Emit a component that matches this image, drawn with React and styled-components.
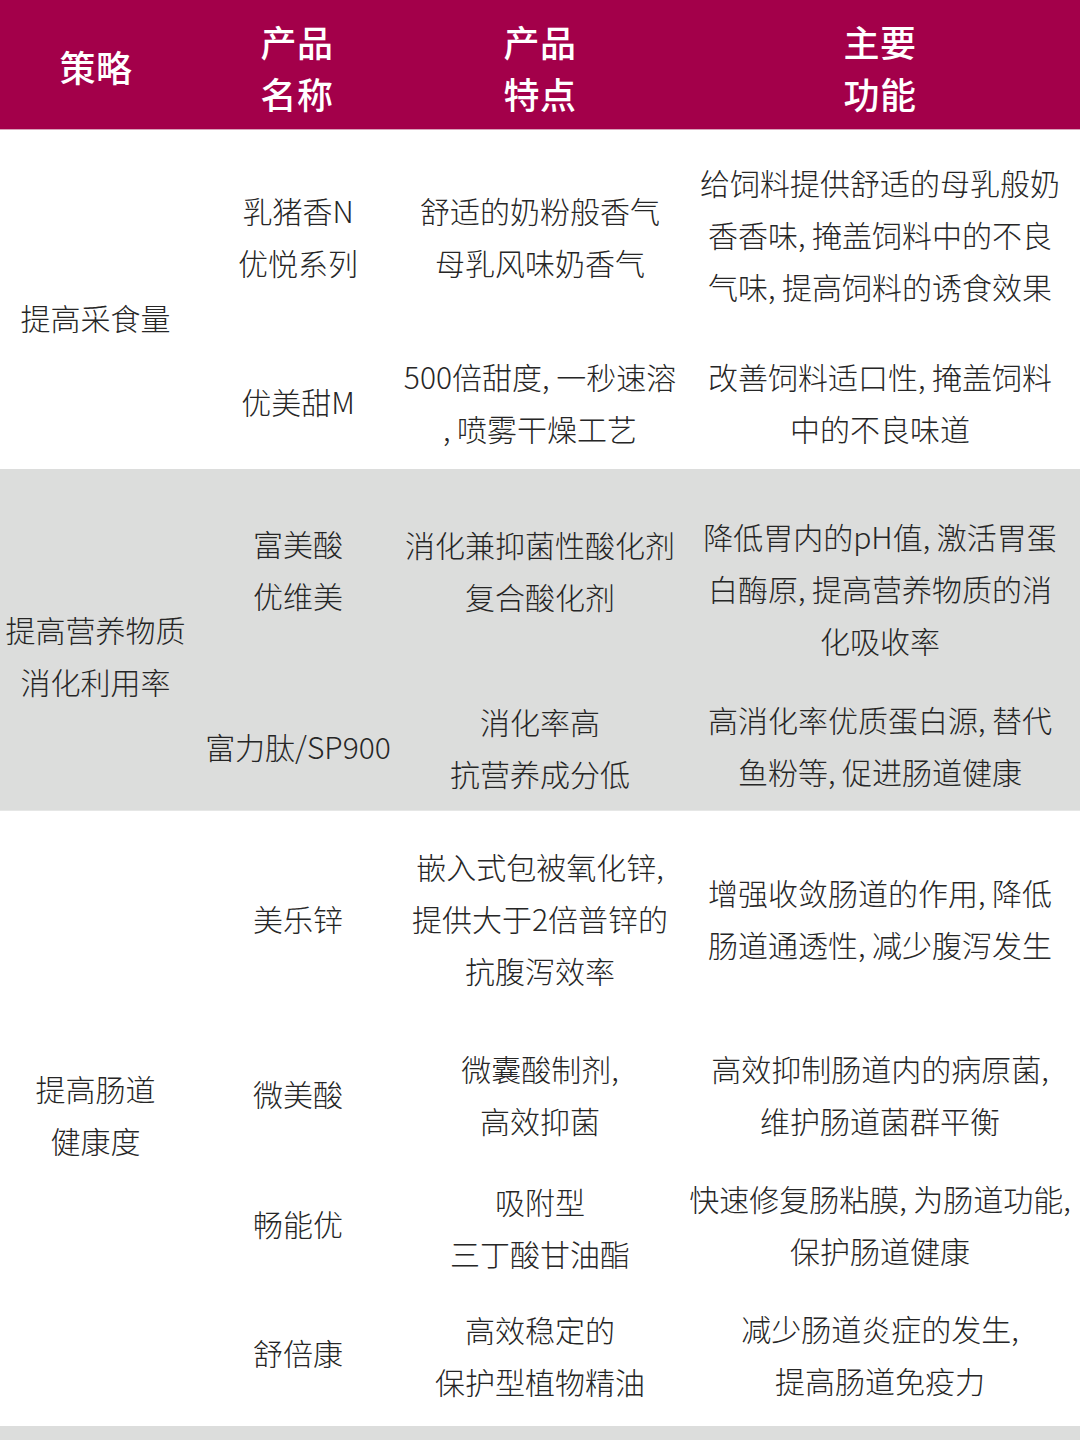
import React from "react";
import styled, { createGlobalStyle } from "styled-components";

const Global = createGlobalStyle`
  html, body { margin: 0; padding: 0; background: #ffffff; }
  body {
    font-family: "Noto Sans CJK SC", "Noto Sans", sans-serif;
    -webkit-font-smoothing: antialiased;
  }
`;

const COLS = "196px 204px 280px 400px";
const BASE_SHIFT = -3;

const Page = styled.div`
  width: 1080px;
  display: flex;
  flex-direction: column;
`;

const Header = styled.div`
  display: grid;
  grid-template-columns: ${COLS};
  height: 130px;
  background: #a3004a;
  border-bottom: 1px solid #d7a2b8;
  box-sizing: border-box;
`;

const HeadCell = styled.div`
  display: flex;
  flex-direction: column;
  align-items: center;
  justify-content: center;
  color: #ffffff;
  font-size: 36px;
  font-weight: 500;
  line-height: 52px;
  letter-spacing: 0.5px;
  padding-top: ${(p) => p.$drop || 0}px;
  padding-right: ${(p) => p.$inset || 0}px;
`;

const Group = styled.div`
  display: grid;
  grid-template-columns: 196px 1fr;
  background: ${(p) => (p.$shade ? "#dcdddc" : "#ffffff")};
  border-bottom: 1px solid ${(p) => (p.$shade ? "#e6e7e6" : "#ffffff")};
`;

const shiftPad = (dy) => {
  const d = dy + BASE_SHIFT;
  return `
    padding-top: ${Math.max(0, d * 2)}px;
    padding-bottom: ${Math.max(0, -d * 2)}px;
  `;
};

const LabelCell = styled.div`
  display: flex;
  flex-direction: column;
  align-items: center;
  justify-content: center;
  padding-right: 5px;
  ${(p) => shiftPad(p.$dy)}
`;

const Rows = styled.div`
  display: flex;
  flex-direction: column;
`;

const Row = styled.div`
  display: grid;
  grid-template-columns: 204px 280px 400px;
  height: ${(p) => p.$h}px;
`;

const Cell = styled.div`
  display: flex;
  flex-direction: column;
  align-items: center;
  justify-content: center;
  ${(p) => shiftPad(p.$dy)}
`;

const Line = styled.div`
  font-size: 30px;
  line-height: 52px;
  font-weight: 300;
  color: #262626;
  white-space: nowrap;
`;

const Footer = styled.div`
  height: 40px;
  background: #dcdddc;
`;

const groups = [
  {
    shade: false,
    label: ["提高采食量"],
    labelDy: 21,
    rows: [
      {
        h: 214,
        cells: [
          { lines: ["乳猪香N", "优悦系列"], dy: 2 },
          { lines: ["舒适的奶粉般香气", "母乳风味奶香气"], dy: 2 },
          { lines: ["给饲料提供舒适的母乳般奶", "香香味, 掩盖饲料中的不良", "气味, 提高饲料的诱食效果"], dy: 0 },
        ],
      },
      {
        h: 124,
        cells: [
          { lines: ["优美甜M"], dy: -2 },
          { lines: ["500倍甜度, 一秒速溶", ", 喷雾干燥工艺"], dy: -1 },
          { lines: ["改善饲料适口性, 掩盖饲料", "中的不良味道"], dy: -1 },
        ],
      },
    ],
  },
  {
    shade: true,
    label: ["提高营养物质", "消化利用率"],
    labelDy: 18,
    rows: [
      {
        h: 220,
        cells: [
          { lines: ["富美酸", "优维美"], dy: -7 },
          { lines: ["消化兼抑菌性酸化剂", "复合酸化剂"], dy: -6 },
          { lines: ["降低胃内的pH值, 激活胃蛋", "白酶原, 提高营养物质的消", "化吸收率"], dy: 12 },
        ],
      },
      {
        h: 121,
        cells: [
          { lines: ["富力肽/SP900"], dy: -1 },
          { lines: ["消化率高", "抗营养成分低"], dy: 0 },
          { lines: ["高消化率优质蛋白源, 替代", "鱼粉等, 促进肠道健康"], dy: -2 },
        ],
      },
    ],
  },
  {
    shade: false,
    label: ["提高肠道", "健康度"],
    labelDy: -1,
    rows: [
      {
        h: 220,
        cells: [
          { lines: ["美乐锌"], dy: 0 },
          { lines: ["嵌入式包被氧化锌,", "提供大于2倍普锌的", "抗腹泻效率"], dy: 0 },
          { lines: ["增强收敛肠道的作用, 降低", "肠道通透性, 减少腹泻发生"], dy: 0 },
        ],
      },
      {
        h: 132,
        cells: [
          { lines: ["微美酸"], dy: -1 },
          { lines: ["微囊酸制剂,", "高效抑菌"], dy: 0 },
          { lines: ["高效抑制肠道内的病原菌,", "维护肠道菌群平衡"], dy: 0 },
        ],
      },
      {
        h: 130,
        cells: [
          { lines: ["畅能优"], dy: -2 },
          { lines: ["吸附型", "三丁酸甘油酯"], dy: 2 },
          { lines: ["快速修复肠粘膜, 为肠道功能,", "保护肠道健康"], dy: -1 },
        ],
      },
      {
        h: 132,
        cells: [
          { lines: ["舒倍康"], dy: -4 },
          { lines: ["高效稳定的", "保护型植物精油"], dy: -1 },
          { lines: ["减少肠道炎症的发生,", "提高肠道免疫力"], dy: -2 },
        ],
      },
    ],
  },
];

const headers = [
  { lines: ["策略"], drop: 2, inset: 4 },
  { lines: ["产品", "名称"], drop: 4, inset: 2 },
  { lines: ["产品", "特点"], drop: 4, inset: 0 },
  { lines: ["主要", "功能"], drop: 4, inset: 0 },
];

export default function App() {
  return (
    <>
      <Global />
      <Page>
        <Header>
          {headers.map((h, i) => (
            <HeadCell key={i} $drop={h.drop} $inset={h.inset}>
              {h.lines.map((t) => (
                <div key={t}>{t}</div>
              ))}
            </HeadCell>
          ))}
        </Header>
        {groups.map((g, gi) => (
          <Group key={gi} $shade={g.shade}>
            <LabelCell $dy={g.labelDy}>
              {g.label.map((t) => (
                <Line key={t}>{t}</Line>
              ))}
            </LabelCell>
            <Rows>
              {g.rows.map((r, ri) => (
                <Row key={ri} $h={r.h}>
                  {r.cells.map((c, ci) => (
                    <Cell key={ci} $dy={c.dy}>
                      {c.lines.map((t) => (
                        <Line key={t}>{t}</Line>
                      ))}
                    </Cell>
                  ))}
                </Row>
              ))}
            </Rows>
          </Group>
        ))}
        <Footer />
      </Page>
    </>
  );
}
